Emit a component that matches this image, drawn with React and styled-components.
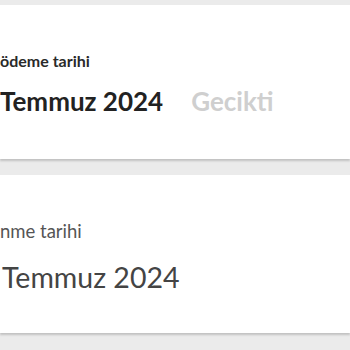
import React from "react";
import styled, { createGlobalStyle } from "styled-components";

const Global = createGlobalStyle`
  html, body { margin: 0; padding: 0; background: #ebebeb; }
  body { font-family: Lato, "Open Sans", sans-serif; }
`;

const Page = styled.div`
  display: flex;
  flex-direction: column;
  gap: 16px;
  padding-top: 5px;
  width: 350px;
  height: 350px;
  box-sizing: border-box;
  overflow: hidden;
`;

const Card = styled.div`
  background: #fff;
  height: ${(p) => p.$h}px;
  box-sizing: border-box;
  box-shadow: 0 2px 2px rgba(0, 0, 0, 0.18);
  display: flex;
  flex-direction: column;
  justify-content: center;
  gap: ${(p) => p.$gap}px;
  padding-top: ${(p) => p.$pt}px;
`;

const Label = styled.div`
  font-size: ${(p) => p.$size}px;
  line-height: 20px;
  font-weight: ${(p) => (p.$bold ? 700 : 400)};
  color: ${(p) => (p.$bold ? "#2a2a2a" : "#555")};
  white-space: nowrap;
`;

const ValueRow = styled.div`
  display: flex;
  align-items: baseline;
  gap: 28px;
  white-space: nowrap;
`;

const Value = styled.span`
  font-size: ${(p) => p.$size}px;
  line-height: 32px;
  font-weight: ${(p) => (p.$bold ? 700 : 400)};
  color: ${(p) => (p.$bold ? "#222" : "#444")};
  margin-left: ${(p) => p.$ml || 0}px;
`;

const Status = styled.span`
  font-size: 26px;
  line-height: 32px;
  font-weight: 700;
  color: #cfcfcf;
`;

export default function App() {
  return (
    <>
      <Global />
      <Page>
        <Card $h={154} $gap={14} $pt={4}>
          <Label $bold $size={16}>ödeme tarihi</Label>
          <ValueRow>
            <Value $bold $size={26}>Temmuz 2024</Value>
            <Status>Gecikti</Status>
          </ValueRow>
        </Card>
        <Card $h={158} $gap={20} $pt={6}>
          <Label $size={18.5}>nme tarihi</Label>
          <ValueRow>
            <Value $size={28.5} $ml={2}>Temmuz 2024</Value>
          </ValueRow>
        </Card>
      </Page>
    </>
  );
}
